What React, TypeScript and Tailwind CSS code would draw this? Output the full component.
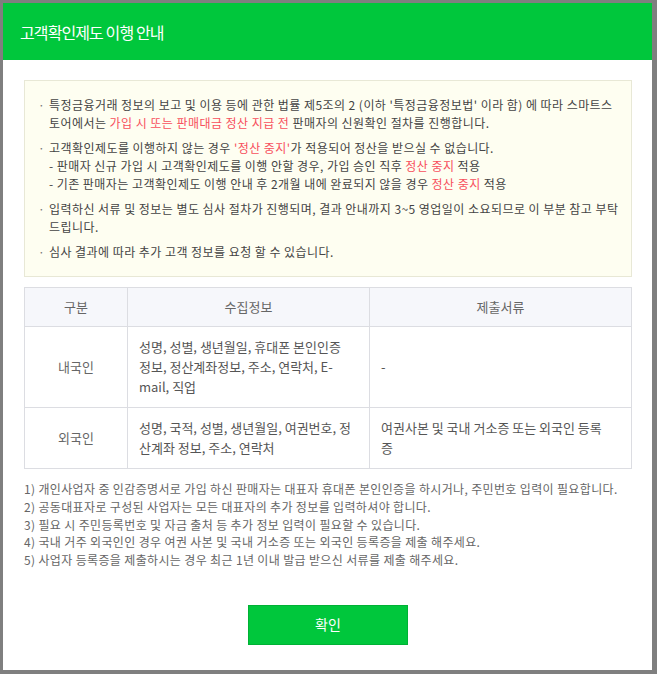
import React from "react";

const red = "text-[#f7505d]";

export default function App() {
  const rows = [
    {
      kind: "내국인",
      info: "성명, 성별, 생년월일, 휴대폰 본인인증 정보, 정산계좌정보, 주소, 연락처, E-mail, 직업",
      docs: "-",
    },
    {
      kind: "외국인",
      info: "성명, 국적, 성별, 생년월일, 여권번호, 정산계좌 정보, 주소, 연락처",
      docs: "여권사본 및 국내 거소증 또는 외국인 등록증",
    },
  ];

  const notes = [
    "1) 개인사업자 중 인감증명서로 가입 하신 판매자는 대표자 휴대폰 본인인증을 하시거나, 주민번호 입력이 필요합니다.",
    "2) 공동대표자로 구성된 사업자는 모든 대표자의 추가 정보를 입력하셔야 합니다.",
    "3) 필요 시 주민등록번호 및 자금 출처 등 추가 정보 입력이 필요할 수 있습니다.",
    "4) 국내 거주 외국인인 경우 여권 사본 및 국내 거소증 또는 외국인 등록증을 제출 해주세요.",
    "5) 사업자 등록증을 제출하시는 경우 최근 1년 이내 발급 받으신 서류를 제출 해주세요.",
  ];

  return (
    <div
      className="h-[674px] w-[657px] bg-[#7f7f7f] p-[3px] overflow-hidden"
      style={{ fontFamily: '"Noto Sans CJK KR", "Noto Sans", sans-serif' }}
    >
      <div className="w-[649px] h-[667px] bg-white flex flex-col">
        {/* header */}
        <div className="h-[57px] bg-[#00c73c] flex items-center px-[17px]">
          <h2 className="text-white text-[16px] tracking-[-0.9px]">고객확인제도 이행 안내</h2>
        </div>

        <div className="pl-[21px] pr-[20px] pt-[20px] flex flex-col">
          {/* notice box */}
          <div className="bg-[#fefef1] border border-[#e8e8d6] pl-[13px] pr-[10px] pt-[15px] pb-[15px] text-[12px] leading-[18px] text-[#444] tracking-[0.45px] flex flex-col gap-[7px]">
            <div className="flex">
              <span className="w-[11px] shrink-0 text-[#777]">·</span>
              <p>
                특정금융거래 정보의 보고 및 이용 등에 관한 법률 제5조의 2 (이하 '특정금융정보법' 이라 함) 에 따라 스마트스토어에서는{" "}
                <span className={red}>가입 시 또는 판매대금 정산 지급 전</span> 판매자의 신원확인 절차를 진행합니다.
              </p>
            </div>
            <div className="flex">
              <span className="w-[11px] shrink-0 text-[#777]">·</span>
              <div>
                <p>
                  고객확인제도를 이행하지 않는 경우 <span className={red}>'정산 중지'</span>가 적용되어 정산을 받으실 수 없습니다.
                </p>
                <p>
                  - 판매자 신규 가입 시 고객확인제도를 이행 안할 경우, 가입 승인 직후 <span className={red}>정산 중지</span> 적용
                </p>
                <p>
                  - 기존 판매자는 고객확인제도 이행 안내 후 2개월 내에 완료되지 않을 경우 <span className={red}>정산 중지</span> 적용
                </p>
              </div>
            </div>
            <div className="flex">
              <span className="w-[11px] shrink-0 text-[#777]">·</span>
              <p>
                입력하신 서류 및 정보는 별도 심사 절차가 진행되며, 결과 안내까지 3~5 영업일이 소요되므로 이 부분 참고 부탁드립니다.
              </p>
            </div>
            <div className="flex">
              <span className="w-[11px] shrink-0 text-[#777]">·</span>
              <p>심사 결과에 따라 추가 고객 정보를 요청 할 수 있습니다.</p>
            </div>
          </div>

          {/* table */}
          <table className="mt-[10px] w-full border-collapse border border-[#dcdde2] text-[13px] text-[#555]">
            <colgroup>
              <col className="w-[103px]" />
              <col className="w-[242px]" />
              <col />
            </colgroup>
            <thead>
              <tr className="bg-[#f6f7fb] h-[39px]">
                <th className="border border-[#dcdde2] font-normal text-[#666]">구분</th>
                <th className="border border-[#dcdde2] font-normal text-[#666]">수집정보</th>
                <th className="border border-[#dcdde2] font-normal text-[#666]">제출서류</th>
              </tr>
            </thead>
            <tbody>
              {rows.map((r) => (
                <tr key={r.kind}>
                  <td className="border border-[#dcdde2] text-center text-[#666]">{r.kind}</td>
                  <td className="border border-[#dcdde2] leading-[20px] pl-[11px] pr-[14px] py-[10px]">{r.info}</td>
                  <td className="border border-[#dcdde2] leading-[20px] pl-[11px] pr-[20px] py-[10px]">{r.docs}</td>
                </tr>
              ))}
            </tbody>
          </table>

          {/* footnotes */}
          <div className="mt-[11px] text-[12px] leading-[17.8px] text-[#666] tracking-[0.35px]">
            {notes.map((n) => (
              <p key={n}>{n}</p>
            ))}
          </div>

          {/* button */}
          <div className="flex justify-center mt-[36px]">
            <button className="w-[160px] h-[40px] bg-[#00c73c] border border-[#00b135] text-white text-[14px]">
              확인
            </button>
          </div>
        </div>
      </div>
    </div>
  );
}
